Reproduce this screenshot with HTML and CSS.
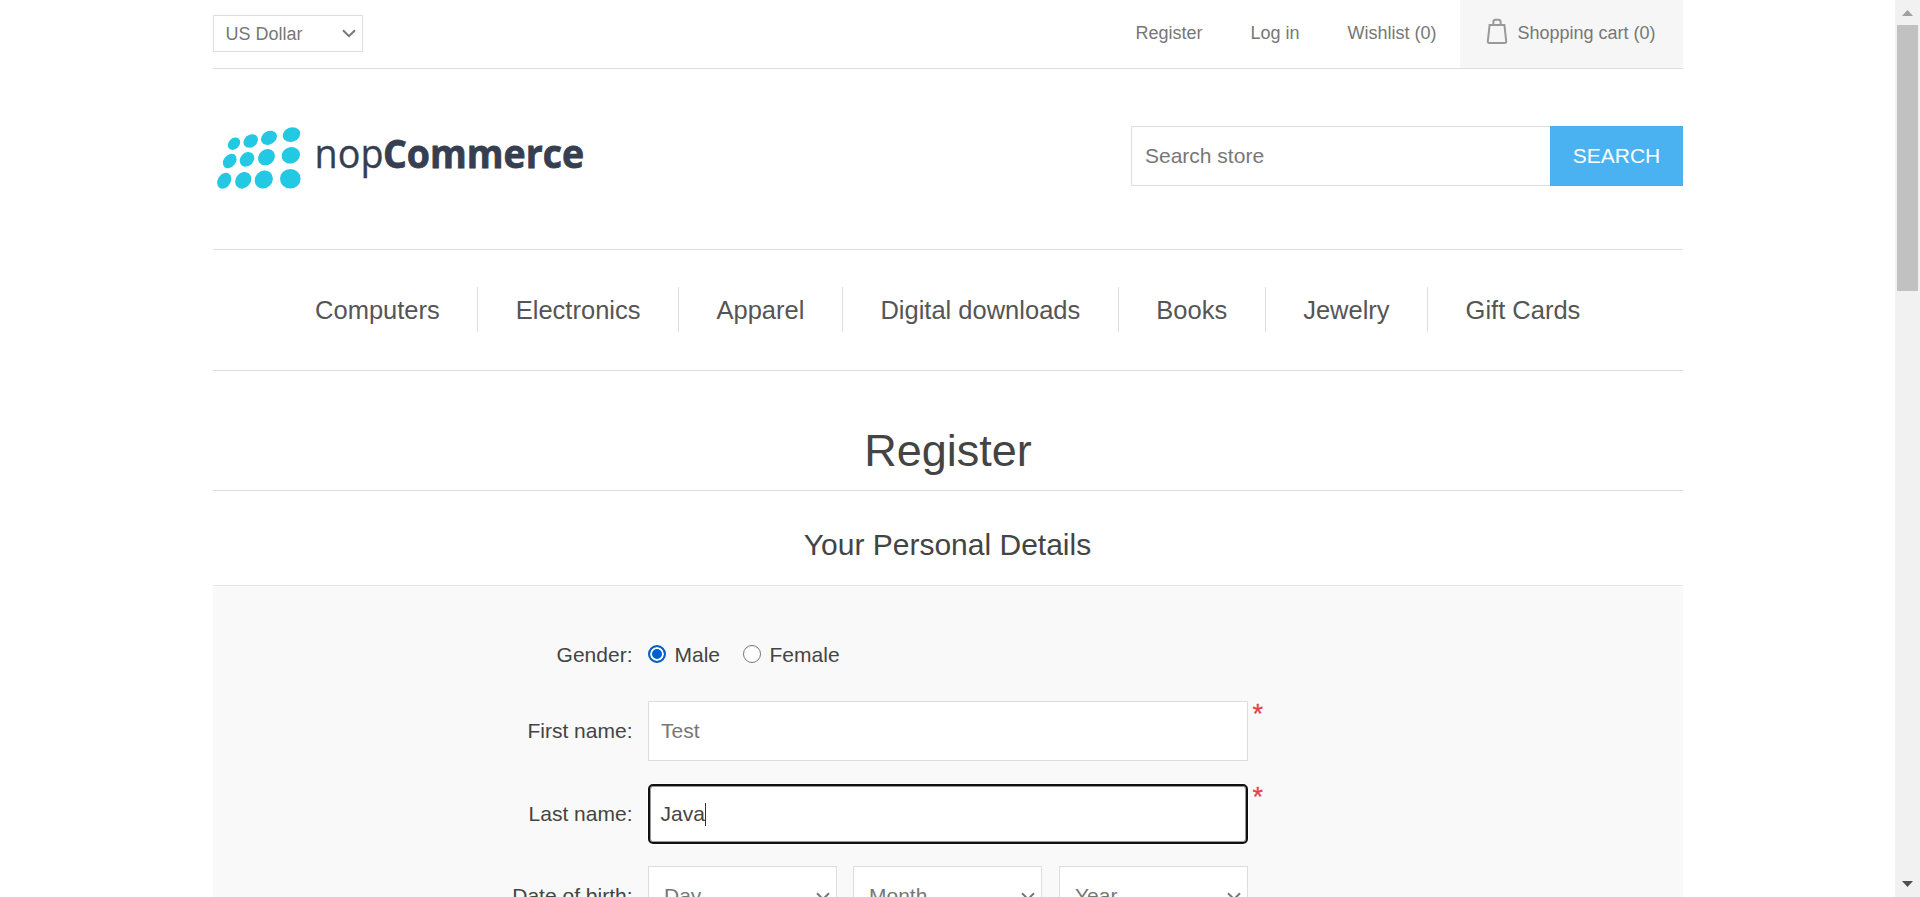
FILE: index.html
```html
<!DOCTYPE html>
<html lang="en">
<head>
<meta charset="utf-8">
<title>Register</title>
<link rel="stylesheet" href="styles.css">
</head>
<body>
<div class="page">
  <header class="topbar">
    <div class="currency">US Dollar
      <svg class="chevron" width="14" height="9" viewBox="0 0 14 9"><path d="M1 1.2l6 6 6-6"/></svg>
    </div>
    <nav class="links">
      <a class="link register">Register</a>
      <a class="link login">Log in</a>
      <a class="link wishlist">Wishlist (0)</a>
      <a class="cart">
        <svg class="bag" width="22" height="28" viewBox="0 0 22 28"><path d="M3.600 8h14.800l1.800 16.500q.1 1.500-1.400 1.500H3.200q-1.500 0-1.400-1.500zM7.400 7.500V5Q7.400 2.700 9.500 2.700h3Q14.600 2.700 14.600 5V7.500"/></svg>
        <span>Shopping cart (0)</span>
      </a>
    </nav>
  </header>
  <div class="brandbar">
    <svg class="logo" width="374" height="76" viewBox="213 116 374 76">
      <g fill="#23c8e2">
        <ellipse cx="234" cy="143.7" rx="6.9" ry="5.4" transform="rotate(-45 234 143.7)"/>
        <ellipse cx="250.7" cy="141" rx="7.8" ry="6.2" transform="rotate(-38 250.7 141)"/>
        <ellipse cx="269" cy="137.8" rx="8.4" ry="6.6" transform="rotate(-30 269 137.8)"/>
        <ellipse cx="291.5" cy="134.6" rx="9" ry="7.2" transform="rotate(-20 291.5 134.6)"/>
        <ellipse cx="229.7" cy="161" rx="8" ry="6" transform="rotate(-50 229.7 161)"/>
        <ellipse cx="247" cy="159.3" rx="8" ry="6.6" transform="rotate(-45 247 159.3)"/>
        <ellipse cx="266.5" cy="157.2" rx="9" ry="7.6" transform="rotate(-38 266.5 157.2)"/>
        <ellipse cx="290.8" cy="155.3" rx="9.4" ry="8.1" transform="rotate(-20 290.8 155.3)"/>
        <ellipse cx="224.2" cy="180.8" rx="8.5" ry="6.4" transform="rotate(-58 224.2 180.8)"/>
        <ellipse cx="243.2" cy="180.3" rx="8.9" ry="7.5" transform="rotate(-50 243.2 180.3)"/>
        <ellipse cx="263.8" cy="179.5" rx="9.5" ry="8.6" transform="rotate(-45 263.8 179.5)"/>
        <ellipse cx="290.3" cy="178.7" rx="10.3" ry="9.8"/>
      </g>
      <text class="nop" x="314.500" y="168.300" textLength="69" lengthAdjust="spacingAndGlyphs">nop</text>
      <text class="commerce" x="383" y="168.300" textLength="201" lengthAdjust="spacingAndGlyphs">Commerce</text>
    </svg>
    <div class="search">
      <div class="search-box">Search store</div>
      <div class="search-button">SEARCH</div>
    </div>
  </div>
  <nav class="menu">
    <a>Computers</a><a>Electronics</a><a>Apparel</a><a>Digital downloads</a><a>Books</a><a>Jewelry</a><a>Gift Cards</a>
  </nav>
  <h1 class="title">Register</h1>
  <h2 class="subtitle">Your Personal Details</h2>
  <section class="form">
    <div class="row gender">
      <span class="label">Gender:</span>
      <span class="radio checked"></span><span class="male">Male</span>
      <span class="radio"></span><span>Female</span>
    </div>
    <div class="row">
      <span class="label">First name:</span><div class="field">Test</div><span class="required">*</span>
    </div>
    <div class="row last-name">
      <span class="label">Last name:</span><div class="field focused">Java<i class="caret"></i></div><span class="required">*</span>
    </div>
    <div class="row dates">
      <span class="label">Date of birth:</span>
      <div class="select day">Day<svg class="chevron" width="14" height="9" viewBox="0 0 14 9"><path d="M1 1.2l6 6 6-6"/></svg></div>
      <div class="select">Month<svg class="chevron" width="14" height="9" viewBox="0 0 14 9"><path d="M1 1.2l6 6 6-6"/></svg></div>
      <div class="select">Year<svg class="chevron" width="14" height="9" viewBox="0 0 14 9"><path d="M1 1.2l6 6 6-6"/></svg></div>
    </div>
  </section>
</div>
<div class="scrollbar">
  <svg width="11" height="6" viewBox="0 0 11 6"><path d="M0 6L5.500 0 11 6z" fill="#a0a0a0"/></svg>
  <div class="thumb"></div>
  <svg class="down" width="11" height="6" viewBox="0 0 11 6"><path d="M0 0h11L5.500 6z" fill="#505050"/></svg>
</div>
</body>
</html>
```
FILE: styles.css
```css
* { box-sizing: border-box; }
body {
  margin: 0;
  height: 897px;
  overflow: hidden;
  display: flex;
  justify-content: space-between;
  background: #fff;
  color: #444;
  font: 21px/24px "Liberation Sans", Arial, sans-serif;
}
.page { width: 1470px; margin-left: 213px; height: 897px; overflow: hidden; }
.topbar {
  height: 69px;
  border-bottom: 1px solid #ddd;
  display: flex;
  justify-content: space-between;
  color: #777;
  font-size: 18px;
}
.currency {
  width: 150px;
  height: 37px;
  margin-top: 15px;
  padding: 0 6px 0 11.5px;
  border: 1px solid #ddd;
  display: flex;
  align-items: center;
  justify-content: space-between;
}
.chevron { fill: none; stroke: #777; stroke-width: 2; flex: none; }
.links { display: flex; line-height: 66px; }
.register { margin-right: 48px; }
.login { margin-right: 48px; }
.wishlist { margin-right: 23.5px; }
.cart {
  width: 223px;
  height: 68px;
  padding-left: 26px;
  background: #f6f6f6;
  display: flex;
}
.bag { margin: 17px 9.5px 0 0; fill: none; stroke: #999; stroke-width: 2; }
.brandbar {
  height: 180px;
  display: flex;
  justify-content: space-between;
}
.logo { margin-top: 47px; overflow: visible; }
.nop, .commerce { font-family: "Open Sans", "Noto Sans", sans-serif; font-size: 40px; fill: #363f51; }
.nop { stroke: #363f51; stroke-width: .3px; }
.commerce { font-weight: 700; stroke: #363f51; stroke-width: .8px; }
.search { display: flex; margin-top: 57px; height: 60px; line-height: 60px; }
.search-box {
  width: 419px;
  padding-left: 13px;
  border: 1px solid #ddd;
  border-right: 0;
  line-height: 58px;
  color: #777;
}
.search-button { width: 133px; background: #4ab2f1; color: #fff; text-align: center; }
.menu {
  height: 122px;
  padding-bottom: 1px;
  padding-right: .6px;
  border: solid #ddd;
  border-width: 1px 0;
  display: flex;
  justify-content: center;
  align-items: center;
  font-size: 25.5px;
  line-height: 47px;
  color: #555;
}
.menu a { height: 45px; padding: 0 37.5px; border-right: 1px solid #ddd; }
.menu a:last-child { border-right: 0; }
.title {
  margin: 0;
  height: 120px;
  padding-top: 54px;
  border-bottom: 1px solid #ddd;
  font-size: 45px;
  line-height: 52px;
  font-weight: 400;
  text-align: center;
}
.subtitle {
  margin: 0;
  height: 94px;
  padding: 37px 1px 0 0;
  font-size: 30px;
  line-height: 34px;
  font-weight: 400;
  text-align: center;
}
.form { height: 400px; border-top: 1px solid #e6e6e6; background: #f9f9f9; padding-top: 46px; }
.row { display: flex; height: 60px; margin-bottom: 23px; line-height: 60px; }
.last-name { margin-bottom: 22px; }
.label { width: 420px; padding-right: .5px; margin-right: 15px; text-align: right; flex: none; }
.gender { height: 46px; line-height: 46px; }
.radio {
  width: 18px;
  height: 18px;
  margin: 13px 8.5px 0 0;
  border: 1.5px solid #767676;
  border-radius: 50%;
  background: #fff;
}
.checked { border: 2px solid #005fcc; background: #005fcc; box-shadow: inset 0 0 0 2px #fff; }
.male { margin-right: 23px; }
.field {
  width: 600px;
  border: 1px solid #ddd;
  background: #fff;
  padding-left: 12px;
  line-height: 58px;
  color: #777;
}
.focused {
  border: 2px solid #101010;
  border-radius: 5px;
  padding-left: 10.5px;
  line-height: 56px;
  color: #444;
  display: flex;
  align-items: center;
  box-shadow: inset 0 0 0 1px #999, 0 0 0 1px #fff;
}
.caret { width: 1px; height: 23px; background: #333; margin-left: .5px; }
.required {
  margin-left: 4.5px;
  font-size: 27px;
  line-height: 27px;
  color: #e4434b;
  -webkit-text-stroke: .3px #e4434b;
}
.select {
  width: 189px;
  height: 60px;
  margin-right: 17px;
  padding: 0 6px 0 15px;
  border: 1px solid #ddd;
  background: #fff;
  color: #777;
  display: flex;
  align-items: center;
  justify-content: space-between;
}
.day { margin-right: 16px; }
.scrollbar {
  width: 25px;
  height: 897px;
  padding: 10px 2px;
  background: #f1f1f1;
  display: flex;
  flex-direction: column;
  align-items: center;
}
.thumb { width: 21px; height: 266px; margin-top: 9px; background: #c1c1c1; }
.down { margin-top: auto; }
```
